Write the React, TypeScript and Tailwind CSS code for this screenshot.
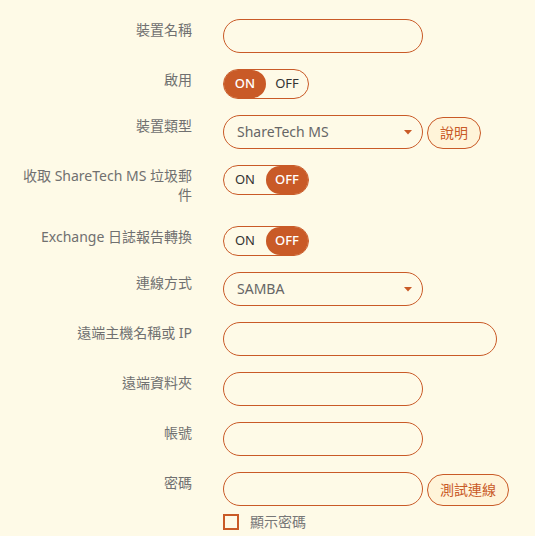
import React from 'react';

const font = { fontFamily: '"Noto Sans", "Noto Sans CJK TC", sans-serif' };

function Label({ children }: { children: React.ReactNode }) {
    return (
        <div className="w-[170px] shrink-0 text-right text-sm leading-[19px] pt-px pb-[6px] text-[#707070]">
            {children}
        </div>
    );
}

function Row({ label, children }: { label: React.ReactNode; children: React.ReactNode }) {
    return (
        <div className="flex items-start gap-[31px] mb-4">
            <Label>{label}</Label>
            <div className="flex items-start gap-1">{children}</div>
        </div>
    );
}

function TextInput({ wide }: { wide?: boolean }) {
    return (
        <input
            className={`h-[34px] ${wide ? 'w-[274px]' : 'w-[200px]'} rounded-full border border-[#c95a27] bg-transparent px-3 text-sm text-[#555] outline-none`}
        />
    );
}

function Select({ value }: { value: string }) {
    return (
        <div className="relative flex h-[34px] w-[200px] items-center rounded-full border border-[#c95a27] pl-[13px] text-sm text-[#666]">
            {value}
            <svg className="absolute right-[10px] top-[14px]" width="8" height="5" viewBox="0 0 8 5">
                <path d="M0 0H8L4 4.5Z" fill="#c95a27" />
            </svg>
        </div>
    );
}

function Toggle({ on }: { on: boolean }) {
    const active = 'bg-[#c95a27] text-white font-medium';
    const idle = 'text-[#333]';
    return (
        <div className="flex h-[30px] w-[86px] rounded-full border border-[#c95a27] text-[13px]">
            <div className={`flex flex-1 items-center justify-center rounded-full ${on ? active : idle}`}>ON</div>
            <div className={`flex flex-1 items-center justify-center rounded-full ${on ? idle : active}`}>OFF</div>
        </div>
    );
}

function PillButton({ children }: { children: React.ReactNode }) {
    return (
        <button className="mt-[2px] h-[32px] rounded-full border border-[#c95a27] bg-[#fff4d9] px-[12px] text-sm text-[#c95a27]">
            {children}
        </button>
    );
}

export default function App() {
    return (
        <div className="min-h-[536px] w-[535px] bg-[#fefae7] pt-[19px] pl-[22px]" style={font}>
            <Row label="裝置名稱">
                <TextInput />
            </Row>
            <Row label="啟用">
                <Toggle on />
            </Row>
            <Row label="裝置類型">
                <Select value="ShareTech MS" />
                <PillButton>說明</PillButton>
            </Row>
            <Row label="收取 ShareTech MS 垃圾郵件">
                <Toggle on={false} />
            </Row>
            <Row label="Exchange 日誌報告轉換">
                <Toggle on={false} />
            </Row>
            <Row label="連線方式">
                <Select value="SAMBA" />
            </Row>
            <Row label="遠端主機名稱或 IP">
                <TextInput wide />
            </Row>
            <Row label="遠端資料夾">
                <TextInput />
            </Row>
            <Row label="帳號">
                <TextInput />
            </Row>
            <div className="flex items-start gap-[31px]">
                <Label>密碼</Label>
                <div className="flex flex-col">
                    <div className="flex items-start gap-1">
                        <TextInput />
                        <PillButton>測試連線</PillButton>
                    </div>
                    <label className="mt-[6px] flex items-center gap-[11px] text-sm text-[#777]">
                        <span className="h-4 w-4 border-2 border-[#c95a27]" />
                        顯示密碼
                    </label>
                </div>
            </div>
        </div>
    );
}
